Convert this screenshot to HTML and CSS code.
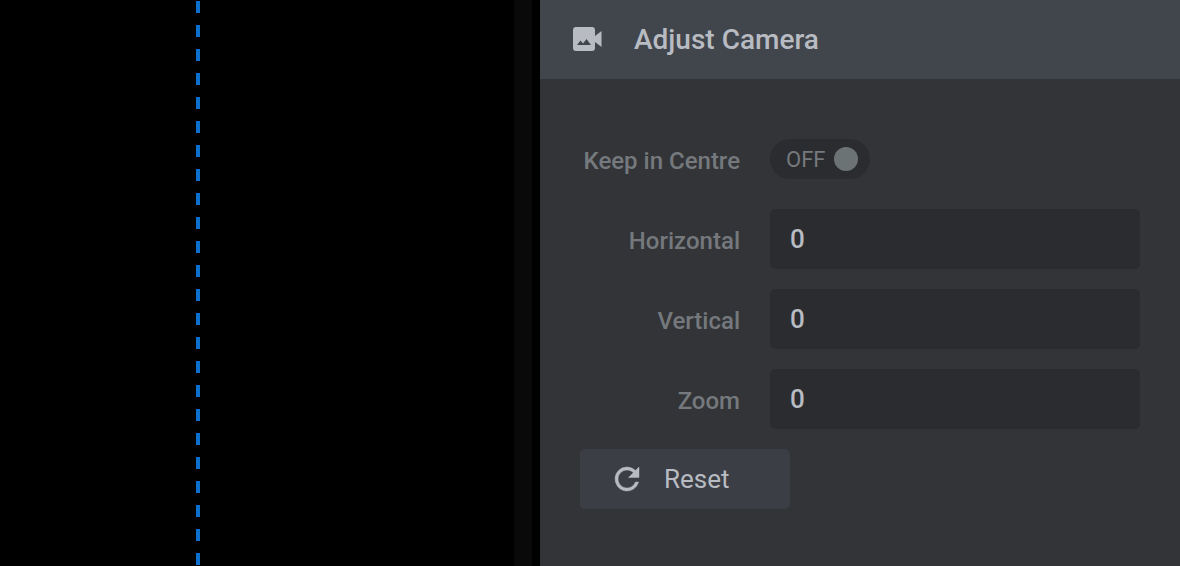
FILE: index.html
```html
<!DOCTYPE html>
<html lang="en">
<head>
	<meta charset="UTF-8">
	<title>Adjust Camera</title>
	<link rel="stylesheet" href="styles.css">
</head>
<body>
	<main class="stage">
		<div class="guide"></div>
		<div class="track"></div>
	</main>

	<aside class="panel">
		<header class="panel-header">
			<svg class="camera-icon" viewBox="0 0 30 26" aria-hidden="true">
				<path fill-rule="evenodd" d="M4 0h16a3 3 0 0 1 3 3v6l6.500-5v16l-6.500-5v6a3 3 0 0 1-3 3H4a3 3 0 0 1-3-3V3a3 3 0 0 1 3-3zM5 18h14l-4.500-6-3.500 4.500-2.500-3z"/>
			</svg>
			<h1>Adjust Camera</h1>
		</header>

		<form class="panel-body" action="#">
			<label class="name" for="centre">Keep in Centre</label>
			<label class="switch">
				<span>OFF</span>
				<input type="checkbox" id="centre">
			</label>

			<label class="name" for="horizontal">Horizontal</label>
			<input type="text" class="field" id="horizontal" value="0">

			<label class="name" for="vertical">Vertical</label>
			<input type="text" class="field" id="vertical" value="0">

			<label class="name" for="zoom">Zoom</label>
			<input type="text" class="field" id="zoom" value="0">

			<button type="reset" class="reset">
				<svg class="reset-icon" viewBox="0 0 24 24" aria-hidden="true">
					<path d="M17.650 6.350A7.960 7.960 0 0 0 12 4a8 8 0 1 0 7.730 10h-2.080A6 6 0 1 1 12 6c1.660 0 3.140.690 4.220 1.780L13 11h7V4z"/>
				</svg>
				Reset
			</button>
		</form>
	</aside>
</body>
</html>
```

FILE: styles.css
```css
* {
	box-sizing: border-box;
}
body {
	margin: 0;
	min-height: 100vh;
	display: flex;
	background-color: #000;
	color: #b8bcc2;
	font-family: Roboto, "Liberation Sans", sans-serif;
}

/* preview area with the centre guide */
.stage {
	flex: 1;
	display: flex;
	justify-content: space-between;
	padding: 0 8px 0 196px;
}
.guide {
	width: 4px;
	background: repeating-linear-gradient(#000 0 1px, #0b6fcb 1px 13px, #000 13px 24px);
}
.track {
	width: 18px;
	background-color: #090909;
}

.panel {
	width: 640px;
	background-color: #333437;
}
.panel-header {
	display: flex;
	align-items: center;
	gap: 32px;
	height: 79px;
	padding: 0 32px;
	background-color: #41454c;
}
.panel-header h1 {
	margin: 0;
	font-size: 28px;
	font-weight: 500;
}
.camera-icon {
	width: 30px;
	height: 26px;
	fill: currentColor;
}

.panel-body {
	display: grid;
	grid-template-columns: 160px 1fr;
	grid-auto-rows: 60px;
	gap: 20px 30px;
	align-items: center;
	padding: 50px 40px;
}
.name {
	padding-top: 4px;
	color: #75797d;
	font-size: 24px;
	font-weight: 500;
	text-align: right;
	white-space: nowrap;
}
.field {
	width: 100%;
	height: 60px;
	padding: 0 20px;
	border: none;
	border-radius: 5px;
	background-color: #2b2c2f;
	color: #b8bcc2;
	font-family: inherit;
	font-size: 26px;
	font-weight: 500;
}

.switch {
	justify-self: start;
	display: flex;
	align-items: center;
	justify-content: space-between;
	width: 100px;
	height: 40px;
	padding: 0 12px 0 16px;
	border-radius: 20px;
	background-color: #2b2c2f;
	color: #75797d;
	font-size: 22px;
}
.switch input {
	appearance: none;
	width: 24px;
	height: 24px;
	margin: 0;
	border-radius: 50%;
	background-color: #6c7375;
}

.reset {
	grid-column: 1 / -1;
	display: flex;
	align-items: center;
	gap: 19px;
	width: 210px;
	height: 60px;
	padding: 0 29px;
	border: none;
	border-radius: 5px;
	background-color: #3b3e44;
	color: #b8bcc2;
	font-family: inherit;
	font-size: 26px;
	cursor: pointer;
}
.reset-icon {
	width: 36px;
	height: 36px;
	fill: currentColor;
	stroke: currentColor;
	stroke-width: 0.3;
}
```
